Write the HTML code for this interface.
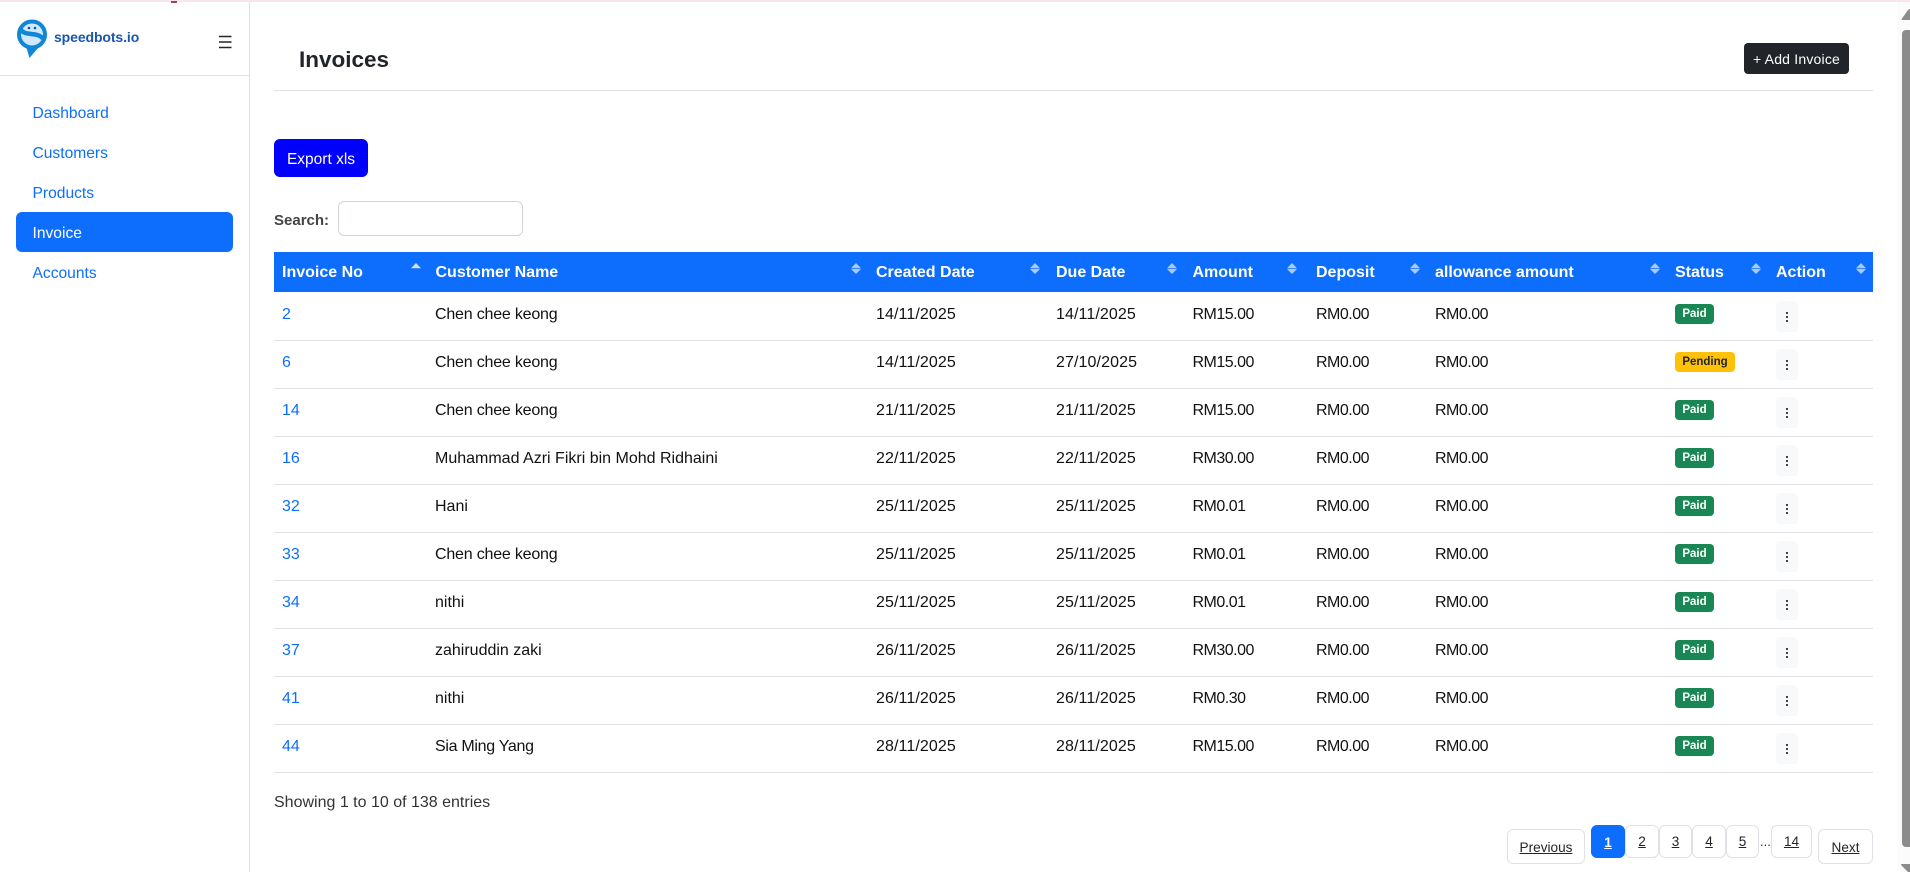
<!DOCTYPE html>
<html lang="en">
<head>
<meta charset="utf-8">
<title>Invoices</title>
<style>
html,body{margin:0;padding:0;width:1910px;height:872px;overflow:hidden;background:#fff;font-family:"Liberation Sans",sans-serif;font-size:16px;color:#111;}
.a{position:absolute;white-space:nowrap;}
#top{position:absolute;left:0;top:0;width:1910px;height:2px;background:#f9e6e8;}
#topmark{position:absolute;left:171px;top:1px;width:6px;height:2px;background:#a04060;}
#sb{position:absolute;left:249px;top:2px;width:1px;height:870px;background:#dee2e6;}
#sbl{position:absolute;left:0;top:75px;width:249px;height:1px;background:#dee2e6;}
.nav{position:absolute;left:32.500px;height:40px;line-height:44px;color:#0d6efd;font-size:15.600px;}
#pill{position:absolute;left:16px;top:212px;width:217px;height:40px;background:#0d6efd;border-radius:6px;}
#thead{position:absolute;left:274px;top:252px;width:1599px;height:40px;background:#0d6efd;}
.th{position:absolute;top:252px;height:40px;line-height:42px;font-weight:bold;color:#fff;font-size:16px;white-space:nowrap;}
.sort{position:absolute;width:10px;height:11px;}
.row{position:absolute;left:274px;width:1599px;height:48px;border-bottom:1px solid #dee2e6;box-sizing:content-box;}
.c{position:absolute;top:0;height:44px;line-height:45px;white-space:nowrap;font-size:16px;color:#111;}
.c1{left:8px;color:#0d6efd;}
.c2{left:161px;}
.ch{letter-spacing:-.2px;}
.si{letter-spacing:-.3px;}
.c3{left:602px;letter-spacing:.1px;}
.c4{left:782px;letter-spacing:.1px;}
.c5{left:918.500px;letter-spacing:-.5px;}
.c6{left:1042px;letter-spacing:-.5px;}
.c7{left:1161px;letter-spacing:-.5px;}
.bd{position:absolute;left:1401px;top:12px;height:20px;line-height:21px;border-radius:4px;font-size:11.500px;font-weight:bold;text-align:center;}
.paid{width:39px;background:#198754;color:#fff;}
.pend{width:60px;background:#ffc107;color:#212529;}
.kb{position:absolute;left:1502px;top:9px;width:22px;height:31px;background:#f8f9fa;border-radius:4px;}
.kb i{position:absolute;left:10px;width:2px;height:2px;background:#444;}
.pg{position:absolute;box-sizing:border-box;border:1px solid #dee2e6;border-radius:6px;text-align:center;font-size:13.600px;color:#212529;text-decoration:underline;background:#fff;}
</style>
</head>
<body>
<div id="top"></div><div id="topmark"></div>
<div id="sb"></div><div id="sbl"></div>

<svg class="a" style="left:16px;top:19px" width="34" height="40" viewBox="0 0 34 40">
<path d="M10 27L13.500 39L22 29Z" fill="#0f86d8"/>
<circle cx="16" cy="15.500" r="13" fill="#cfe9fb" stroke="#0f86d8" stroke-width="4"/>
<path d="M4 9C8 19 22 11 28 21" fill="none" stroke="#0f86d8" stroke-width="4.500"/>
<circle cx="13" cy="9" r="1.300" fill="#14539f"/><circle cx="19" cy="9" r="1.300" fill="#14539f"/>
</svg>
<div class="a" style="left:54px;top:27px;line-height:20px;font-size:14px;font-weight:bold;color:#1a56ad;letter-spacing:-.1px">speedbots.io</div>
<svg class="a" style="left:219px;top:35px" width="13" height="14" viewBox="0 0 13 14"><path d="M0 1.500h12.500M0 7h12.500M0 12.500h12.500" stroke="#212529" stroke-width="1.500"/></svg>

<div class="nav" style="top:92px">Dashboard</div>
<div class="nav" style="top:132px">Customers</div>
<div class="nav" style="top:172px">Products</div>
<div id="pill"></div>
<div class="nav" style="top:212px;color:#fff">Invoice</div>
<div class="nav" style="top:252px">Accounts</div>

<div class="a" style="left:299px;top:44px;line-height:32px;font-size:22.500px;font-weight:bold;color:#212529">Invoices</div>
<div class="a" style="left:274px;top:90px;width:1599px;height:1px;background:#dee2e6"></div>
<div class="a" style="left:1744px;top:43px;width:105px;height:31px;line-height:32px;background:#212529;color:#fff;border-radius:4px;font-size:14px;letter-spacing:.2px;text-align:center">+ Add Invoice</div>
<div class="a" style="left:274px;top:139px;width:94px;height:38px;line-height:41px;background:#0000ff;color:#fff;border-radius:6px;font-size:15.500px;text-align:center">Export xls</div>
<div class="a" style="left:274px;top:209px;line-height:24px;font-size:15px;font-weight:bold;color:#444">Search:</div>
<div class="a" style="left:338px;top:201px;width:185px;height:35px;box-sizing:border-box;border:1px solid #ced4da;border-radius:6px;background:#fff"></div>

<div id="thead"></div>
<div class="th" style="left:282px">Invoice No</div>
<div class="th" style="left:435.500px">Customer Name</div>
<div class="th" style="left:876px">Created Date</div>
<div class="th" style="left:1056px">Due Date</div>
<div class="th" style="left:1192.500px">Amount</div>
<div class="th" style="left:1316px">Deposit</div>
<div class="th" style="left:1435px">allowance amount</div>
<div class="th" style="left:1675px">Status</div>
<div class="th" style="left:1776px">Action</div>

<svg class="sort" style="left:411px;top:263px" viewBox="0 0 10 11"><path d="M5 0l5 5.200H0Z" fill="#cfe0ff"/></svg>
<svg class="sort" style="left:851px;top:263px" viewBox="0 0 10 11"><path d="M5 0l5 5.200H0Z M5 11l5-5H0Z" fill="#a9c9ff"/></svg>
<svg class="sort" style="left:1030px;top:263px" viewBox="0 0 10 11"><path d="M5 0l5 5.200H0Z M5 11l5-5H0Z" fill="#a9c9ff"/></svg>
<svg class="sort" style="left:1167px;top:263px" viewBox="0 0 10 11"><path d="M5 0l5 5.200H0Z M5 11l5-5H0Z" fill="#a9c9ff"/></svg>
<svg class="sort" style="left:1287px;top:263px" viewBox="0 0 10 11"><path d="M5 0l5 5.200H0Z M5 11l5-5H0Z" fill="#a9c9ff"/></svg>
<svg class="sort" style="left:1410px;top:263px" viewBox="0 0 10 11"><path d="M5 0l5 5.200H0Z M5 11l5-5H0Z" fill="#a9c9ff"/></svg>
<svg class="sort" style="left:1650px;top:263px" viewBox="0 0 10 11"><path d="M5 0l5 5.200H0Z M5 11l5-5H0Z" fill="#a9c9ff"/></svg>
<svg class="sort" style="left:1751px;top:263px" viewBox="0 0 10 11"><path d="M5 0l5 5.200H0Z M5 11l5-5H0Z" fill="#a9c9ff"/></svg>
<svg class="sort" style="left:1856px;top:263px" viewBox="0 0 10 11"><path d="M5 0l5 5.200H0Z M5 11l5-5H0Z" fill="#a9c9ff"/></svg>

<div class="row" style="top:292px"><span class="c c1">2</span><span class="c c2 ch">Chen chee keong</span><span class="c c3">14/11/2025</span><span class="c c4">14/11/2025</span><span class="c c5">RM15.00</span><span class="c c6">RM0.00</span><span class="c c7">RM0.00</span><span class="bd paid">Paid</span><span class="kb"><i style="top:11px"></i><i style="top:15px"></i><i style="top:19px"></i></span></div>
<div class="row" style="top:340px"><span class="c c1">6</span><span class="c c2 ch">Chen chee keong</span><span class="c c3">14/11/2025</span><span class="c c4">27/10/2025</span><span class="c c5">RM15.00</span><span class="c c6">RM0.00</span><span class="c c7">RM0.00</span><span class="bd pend">Pending</span><span class="kb"><i style="top:11px"></i><i style="top:15px"></i><i style="top:19px"></i></span></div>
<div class="row" style="top:388px"><span class="c c1">14</span><span class="c c2 ch">Chen chee keong</span><span class="c c3">21/11/2025</span><span class="c c4">21/11/2025</span><span class="c c5">RM15.00</span><span class="c c6">RM0.00</span><span class="c c7">RM0.00</span><span class="bd paid">Paid</span><span class="kb"><i style="top:11px"></i><i style="top:15px"></i><i style="top:19px"></i></span></div>
<div class="row" style="top:436px"><span class="c c1">16</span><span class="c c2">Muhammad Azri Fikri bin Mohd Ridhaini</span><span class="c c3">22/11/2025</span><span class="c c4">22/11/2025</span><span class="c c5">RM30.00</span><span class="c c6">RM0.00</span><span class="c c7">RM0.00</span><span class="bd paid">Paid</span><span class="kb"><i style="top:11px"></i><i style="top:15px"></i><i style="top:19px"></i></span></div>
<div class="row" style="top:484px"><span class="c c1">32</span><span class="c c2">Hani</span><span class="c c3">25/11/2025</span><span class="c c4">25/11/2025</span><span class="c c5">RM0.01</span><span class="c c6">RM0.00</span><span class="c c7">RM0.00</span><span class="bd paid">Paid</span><span class="kb"><i style="top:11px"></i><i style="top:15px"></i><i style="top:19px"></i></span></div>
<div class="row" style="top:532px"><span class="c c1">33</span><span class="c c2 ch">Chen chee keong</span><span class="c c3">25/11/2025</span><span class="c c4">25/11/2025</span><span class="c c5">RM0.01</span><span class="c c6">RM0.00</span><span class="c c7">RM0.00</span><span class="bd paid">Paid</span><span class="kb"><i style="top:11px"></i><i style="top:15px"></i><i style="top:19px"></i></span></div>
<div class="row" style="top:580px"><span class="c c1">34</span><span class="c c2">nithi</span><span class="c c3">25/11/2025</span><span class="c c4">25/11/2025</span><span class="c c5">RM0.01</span><span class="c c6">RM0.00</span><span class="c c7">RM0.00</span><span class="bd paid">Paid</span><span class="kb"><i style="top:11px"></i><i style="top:15px"></i><i style="top:19px"></i></span></div>
<div class="row" style="top:628px"><span class="c c1">37</span><span class="c c2">zahiruddin zaki</span><span class="c c3">26/11/2025</span><span class="c c4">26/11/2025</span><span class="c c5">RM30.00</span><span class="c c6">RM0.00</span><span class="c c7">RM0.00</span><span class="bd paid">Paid</span><span class="kb"><i style="top:11px"></i><i style="top:15px"></i><i style="top:19px"></i></span></div>
<div class="row" style="top:676px"><span class="c c1">41</span><span class="c c2">nithi</span><span class="c c3">26/11/2025</span><span class="c c4">26/11/2025</span><span class="c c5">RM0.30</span><span class="c c6">RM0.00</span><span class="c c7">RM0.00</span><span class="bd paid">Paid</span><span class="kb"><i style="top:11px"></i><i style="top:15px"></i><i style="top:19px"></i></span></div>
<div class="row" style="top:724px"><span class="c c1">44</span><span class="c c2 si">Sia Ming Yang</span><span class="c c3">28/11/2025</span><span class="c c4">28/11/2025</span><span class="c c5">RM15.00</span><span class="c c6">RM0.00</span><span class="c c7">RM0.00</span><span class="bd paid">Paid</span><span class="kb"><i style="top:11px"></i><i style="top:15px"></i><i style="top:19px"></i></span></div>

<div class="a" style="left:274px;top:791px;line-height:24px;font-size:16px;color:#333">Showing 1 to 10 of 138 entries</div>

<div class="pg" style="left:1507px;top:829px;width:78px;height:35px;line-height:35px">Previous</div>
<div class="pg" style="left:1591px;top:825px;width:34px;height:33px;line-height:33px;background:#0d6efd;border-color:#0d6efd;color:#fff;font-weight:bold">1</div>
<div class="pg" style="left:1625px;top:825px;width:34px;height:33px;line-height:31px">2</div>
<div class="pg" style="left:1659px;top:825px;width:33px;height:33px;line-height:31px">3</div>
<div class="pg" style="left:1692px;top:825px;width:34px;height:33px;line-height:31px">4</div>
<div class="pg" style="left:1726px;top:825px;width:33px;height:33px;line-height:31px">5</div>
<div class="a" style="left:1760px;top:830px;line-height:24px;font-size:13px;color:#333">...</div>
<div class="pg" style="left:1771px;top:825px;width:41px;height:33px;line-height:31px">14</div>
<div class="pg" style="left:1818px;top:829px;width:55px;height:35px;line-height:35px">Next</div>

<div class="a" style="left:1897px;top:2px;width:13px;height:870px;background:#fbfbfb"></div>
<div class="a" style="left:1902px;top:30px;width:8px;height:817px;background:#8c8c8c;border-radius:4px 0 0 4px"></div>
<svg class="a" style="left:1901px;top:9px" width="9" height="12" viewBox="0 0 9 12"><path d="M9 0v11H1Q0 11 1 9.500L7 1Q8 0 9 0Z" fill="#8c8c8c"/></svg>
<svg class="a" style="left:1901px;top:864px" width="9" height="8" viewBox="0 0 9 8"><path d="M0 0H9V8H7L1 2Q0 1 0 0Z" fill="#8c8c8c"/></svg>
</body>
</html>
